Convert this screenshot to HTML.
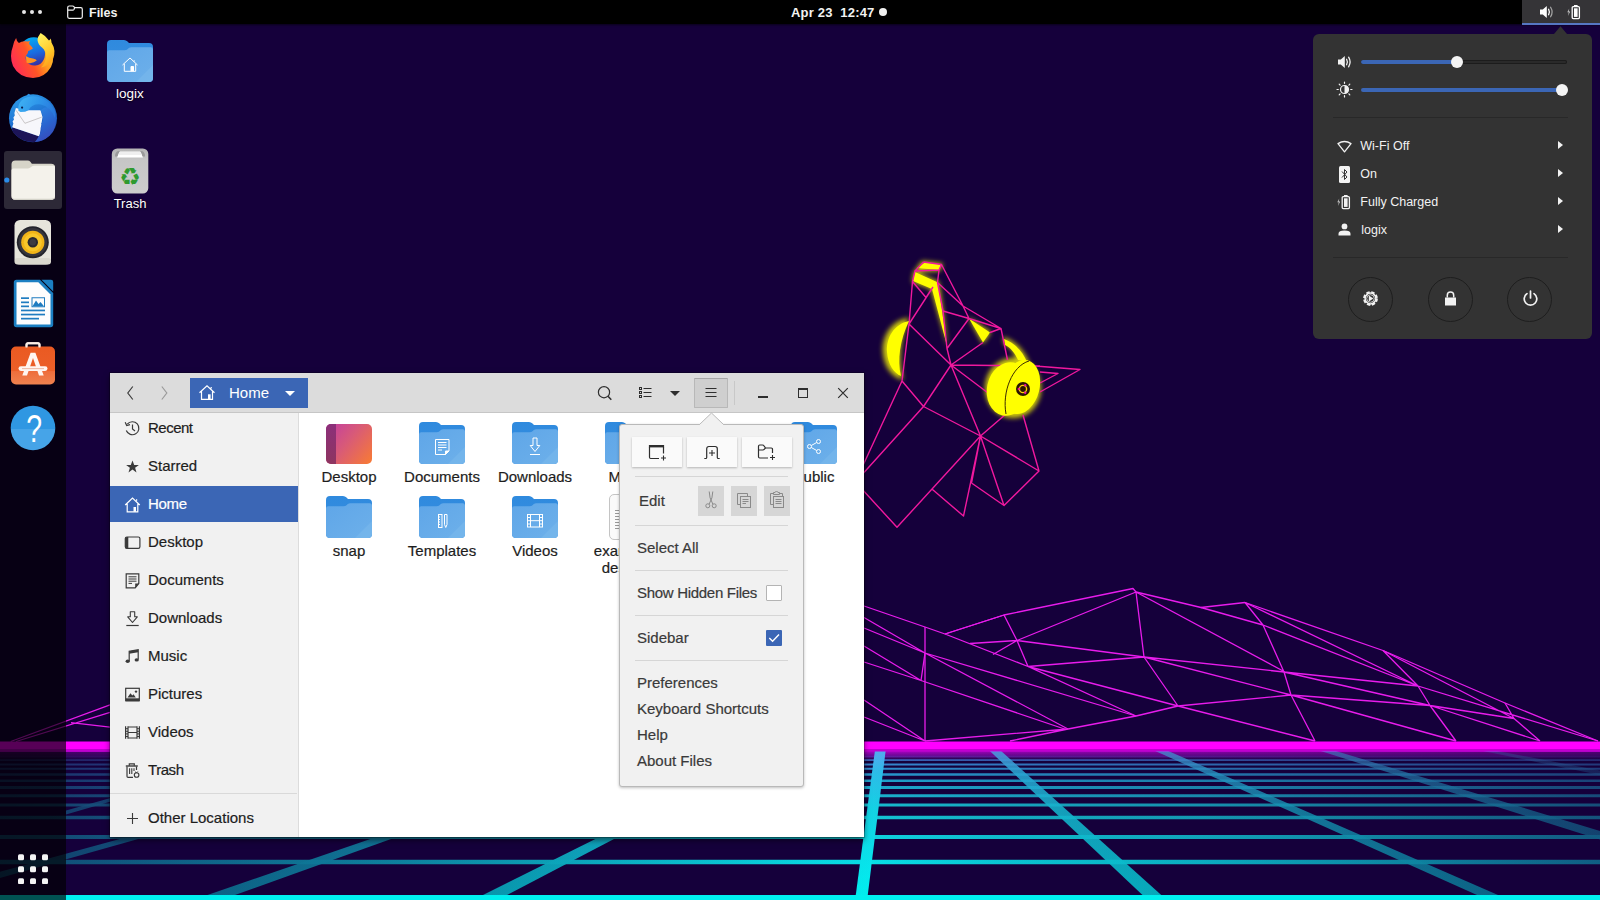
<!DOCTYPE html>
<html lang="en">
<head>
<meta charset="utf-8">
<title>Files</title>
<style>
*{box-sizing:border-box;margin:0;padding:0}
html,body{width:1600px;height:900px;overflow:hidden;background:#15003b}
body{position:relative;font-family:"Liberation Sans","DejaVu Sans",sans-serif;font-size:14px;color:#222}
.abs{position:absolute}
#wall{position:absolute;left:0;top:0;width:1600px;height:900px}
/* top bar */
#topbar{position:absolute;left:0;top:0;width:1600px;height:24px;background:#000;box-shadow:0 1px 2px rgba(0,0,0,.6);color:#f2f2f2;font-weight:bold;font-size:13px}
#topbar .t{position:absolute;top:0.8px;line-height:24px;white-space:nowrap}
#tray{position:absolute;left:1522px;top:0;width:78px;height:25px;background:#353437;border-bottom:2px solid #5677c3}
/* dock */
#dock{position:absolute;left:0;top:24px;width:66px;height:876px;background:rgba(0,0,0,0.66)}
#dock .run{position:absolute;left:4px;top:127px;width:58px;height:58px;background:#2d2937;border-radius:3px}
/* desktop icons */
.dlabel{position:absolute;color:#fff;font-size:13.5px;text-align:center;width:90px;text-shadow:0 1px 2px rgba(0,0,0,.8)}
/* window */
#win{position:absolute;left:110px;top:373px;width:754px;height:464px;background:#fff;box-shadow:0 0 0 1px rgba(0,0,0,.22),0 3px 6px rgba(0,0,0,.55)}
#hdr{position:absolute;left:0;top:0;width:754px;height:40px;background:#dcdcdc;border-bottom:1px solid #c6c6c6}
#path{position:absolute;left:80px;top:5px;width:118px;height:30px;background:#3b66b5;color:#fff}
#side{position:absolute;left:0;top:40px;width:189px;height:424px;background:#f1f1f1;border-right:1px solid #dcdcdc}
.row{position:absolute;left:0;width:188px;height:36px;line-height:36px;font-size:15px;color:#1d1d1d}
.row span{position:absolute;left:38px;top:0;white-space:nowrap}
.row svg{position:absolute;left:14px;top:10px;width:17px;height:17px}
.row.sel{background:#3b66b5;color:#fff}
.row span,.flabel,.mi{-webkit-text-stroke:0.2px currentColor}
.flabel{position:absolute;font-size:15px;color:#1d1d1d;text-align:center;width:110px;white-space:nowrap}
/* popover */
#pop{position:absolute;left:619px;top:424px;width:185px;height:363px;background:#f1f1f1;border:1px solid #b9b9b9;border-radius:3px;box-shadow:0 1px 3px rgba(0,0,0,.25)}
.mi{position:absolute;left:17px;font-size:15px;color:#3a3a3a;white-space:nowrap}
.pbtn{position:absolute;top:12px;width:49.5px;height:30px;background:#fafafa;box-shadow:0 1px 2px rgba(0,0,0,.25)}
.ebtn{position:absolute;top:61px;width:26px;height:30px;background:#d6d6d6}
.sep{position:absolute;left:15px;width:153px;height:1px;background:#d6d6d6}
/* system menu */
#sys{position:absolute;left:1312.5px;top:33.5px;width:279px;height:305.5px;background:#333;border-radius:6px;color:#f2f2f2;font-size:12.5px}
.si{position:absolute;left:47.8px;white-space:nowrap}
.sarrow{position:absolute;left:245px;width:0;height:0;border-left:5.5px solid #f2f2f2;border-top:4.5px solid transparent;border-bottom:4.5px solid transparent}
.circ{position:absolute;top:243px;width:45px;height:45px;border:1px solid #1e1e1e;border-radius:50%}
</style>
</head>
<body>
<svg id="wall" width="1600" height="900" viewBox="0 0 1600 900">
<defs>
<linearGradient id="hz" x1="0" y1="0" x2="0" y2="1"><stop offset="0" stop-color="#c400d4"/><stop offset="0.550" stop-color="#6a0a9a" stop-opacity=".85"/><stop offset="1" stop-color="#15003b" stop-opacity="0"/></linearGradient>
<linearGradient id="cy" gradientUnits="userSpaceOnUse" x1="0" y1="750" x2="0" y2="900"><stop offset="0" stop-color="#5060c8"/><stop offset="0.070" stop-color="#3a7fd0"/><stop offset="0.200" stop-color="#1f9fcb"/><stop offset="0.370" stop-color="#16bace"/><stop offset="0.580" stop-color="#0ed2de"/><stop offset="1" stop-color="#00eef0"/></linearGradient>
<linearGradient id="cyd" gradientUnits="userSpaceOnUse" x1="0" y1="750" x2="0" y2="900"><stop offset="0" stop-color="#58a8f0"/><stop offset="0.150" stop-color="#2cbce8"/><stop offset="0.400" stop-color="#14d2e4"/><stop offset="1" stop-color="#00f0f0"/></linearGradient>
<linearGradient id="cyr" gradientUnits="userSpaceOnUse" x1="860" y1="0" x2="1600" y2="0"><stop offset="0" stop-color="#fff" stop-opacity="1"/><stop offset="1" stop-color="#fff" stop-opacity=".45"/></linearGradient>
<linearGradient id="sidefade" gradientUnits="userSpaceOnUse" x1="0" y1="0" x2="1600" y2="0"><stop offset="0" stop-color="#15003b" stop-opacity=".68"/><stop offset="0.250" stop-color="#15003b" stop-opacity=".42"/><stop offset="0.500" stop-color="#15003b" stop-opacity=".05"/><stop offset="0.545" stop-color="#15003b" stop-opacity="0"/><stop offset="0.630" stop-color="#15003b" stop-opacity=".12"/><stop offset="0.750" stop-color="#15003b" stop-opacity=".22"/><stop offset="0.875" stop-color="#15003b" stop-opacity=".4"/><stop offset="1" stop-color="#15003b" stop-opacity=".58"/></linearGradient>
<filter id="glow" x="-30%" y="-30%" width="160%" height="160%"><feGaussianBlur stdDeviation="2.800"/></filter>
</defs>
<rect width="1600" height="900" fill="#15003b"/>
<!-- mountain mesh -->
<g fill="none" stroke="#e81cec" stroke-width="1.3" stroke-linejoin="round">
<polyline points="10.700,741.500 110,704.900 864,606 925,627 945,634 1004,615 1133,588.5 1136,592 1201,607.5 1245,602.5 1383,650.5 1505,703 1598,741"/>
<path d="M925,627V741M945,634L1028,666.5L1136,716M1004,615L1017,640.5L1028,666.5M945,634L1004,615M970,643.5L1017,640.5L1144,657M993,654.5L1017,640.5L1136,592M1136,592L1144,657L1178,706M1028,666.5L1144,657M1028,666.5L1178,706M1036,670L1136,716L1178,706M1068,729L1136,716M925,741L1068,729M1010,741L1068,729"/>
<path d="M864,617.5L925,653L1068,729M864,628L925,653M925,653L1136,716M864,646L921,680.5L925,653M864,662L921,680.5L1066,729.5M864,700L925,741M864,717L925,741"/>
<path d="M1136,592L1285,672M1201,607.5L1263,625M1245,602.5L1263,625L1284,672L1291,695L1315,741M1245,602.5L1418,686M1263,625L1418,686M1144,657L1284,672M1144,657L1291,695M1178,706L1291,695M1178,706L1315,741M1284,672L1418,686M1291,695L1430,705.5M1291,695L1456,741M1383,650.5L1418,686L1430,705.5L1456,741M1383,650.5L1514,718.5M1505,703L1514,718.5L1540,741M1418,686L1598,741M1430,705.5L1514,718.5M1430,705.5L1540,741M1284,672L1430,705.5"/>
<path d="M16,741.500L110,712.400M71,722.700L110,727.100"/>
</g>
<!-- horizon -->
<!-- grid -->
<g stroke="url(#cy)" fill="none">
<path stroke-width="1.600" d="M0,756.500H1600"/>
<path stroke-width="2" d="M0,760H1600M0,764.500H1600"/>
<path stroke-width="2.200" d="M0,768.750H1600"/>
<path stroke-width="2.500" d="M0,774.500H1600M0,780.750H1600"/>
<path stroke-width="2.800" d="M0,787.500H1600"/>
<path stroke-width="3" d="M0,795.750H1600"/>
<path stroke-width="3.200" d="M0,805H1600"/>
<path stroke-width="3.500" d="M0,817.500H1600"/>
<path stroke-width="4" d="M0,837H1600"/>
<path stroke-width="4.500" d="M0,862H1600"/>
</g>
<rect x="0" y="750" width="1600" height="12" fill="url(#hz)"/>
<g fill="url(#cyd)">
<polygon points="875,750 885.750,750 867.500,897 855.500,897"/>
<polygon points="988.750,750 1000,750 1161.250,895 1142.500,895" opacity=".88"/>
<polygon points="1153,750 1166,750 1498,895 1477,895" opacity=".8"/>
<polygon points="1317.500,750 1332.500,750 1600,831 1600,839.500" opacity=".72"/>
<polygon points="1478,750 1492,750 1600,770.500 1600,775" opacity=".4"/>
<polygon points="774,750 784,750 497.500,900 473,900" opacity=".95"/>
<polygon points="629,750 639,750 221,900 193,900" opacity=".9"/>
<polygon points="446,750 454,750 -78,900 -104,900" opacity=".85"/>
<polygon points="282,750 289,750 66,814.500 66,810.500" opacity=".8"/>
</g>
<rect x="0" y="752" width="1600" height="143" fill="url(#sidefade)"/>
<rect x="0" y="895" width="1600" height="5" fill="#00f0f0"/>
<rect x="0" y="741.500" width="1600" height="9" fill="#ff00ff"/>
<rect x="0" y="749" width="1600" height="2.500" fill="#c000d0"/>
<!-- wolf glow -->
<g fill="#ffff00" filter="url(#glow)" opacity=".8">
<path d="M909,318C891,320 882,337 883,352C884,367 892,377 903,380C898,360 900,340 909,318Z"/>
<ellipse cx="1013" cy="388" rx="28" ry="30"/>
<path d="M922,261L943,263.500L940,271L914,272Z"/>
<path d="M914,271L939,282L948,348L931,289L912,282Z"/>
<path d="M968,317L991,332L983,344Z"/>
<path d="M1003,337C1016,341 1025,352 1029,363L1017,360C1014,352 1010,346 1004,344Z"/>
</g>
<g fill="#ffff00">
<path d="M925,262.500L941,264.500L939.500,270L917,268Z"/>
<path d="M915,272L938,282.500L947,346L932,289L913,281Z"/>
<path d="M969,318.500L990,332.500L983,342.500Z"/>
<path d="M1004,339C1015,343 1023,352 1027,362L1018,360C1015,353 1010,347 1005,345Z"/>
</g>
<!-- wolf lines -->
<g fill="none" stroke="#f0189e" stroke-width="1.400" stroke-linejoin="round">
<path d="M923.500,262L941.500,264.500L939,270L915,271L923.500,262M915,271L912.500,281.500L909,324L902,381M941.500,264.500L963,306L1001,328.500L1007.500,360M939,270L937.500,282.500L943,311L969,318.500M915,271L939,270M912.500,281.500L926,297.500L933,287M933,287L909,324M937.500,282.500L963,306M943,311L947,348.500L951,365M969,318.500L947,348.500M969,318.500L1001,328.500M969,318.500L963,306M990,332.500L1001,328.500M983,342.500L951,365M909,324L951,365M951,365L1040,366M1035,366L1080,369.500L1040,392M1040,372L1058,373.500L1040,383M951,365L923.500,406.500M951,365L980.500,436M951,365L1000,402M902,381L923.500,406.500L980.500,436M902,381L850,493.500M923.500,406.500L850,488M850,476L897,527.300L980.500,436M932.500,489.500L963.500,516L980.500,436M971.500,483L1004,505.500L980.500,436M971.500,483L980.500,436M1004,505.500L1039,471L980.500,436M1039,471L1023,415M980.500,436L1006,414"/>
</g>
<g fill="#ffff00">
<path d="M909,321C894,324 886,338 887,352C888,365 894,373 901,376C897,360 900,340 909,321Z"/>
<ellipse cx="1008" cy="389" rx="21" ry="27" transform="rotate(12 1008 389)"/>
<ellipse cx="1021" cy="387" rx="18.500" ry="27.500" transform="rotate(14 1021 387)"/>
</g>
<path d="M1029,361C1012,366 1002,392 1006,414" fill="none" stroke="#3a2a00" stroke-width="1"/>
<circle cx="1023" cy="389" r="7" fill="#2a1500"/>
<circle cx="1023" cy="389" r="3.600" fill="none" stroke="#ffd000" stroke-width="1.400"/>
<circle cx="1018.800" cy="389" r="1.200" fill="#e8189a"/><circle cx="1025.200" cy="385.300" r="1.200" fill="#e8189a"/><circle cx="1025.200" cy="392.700" r="1.200" fill="#e8189a"/>
</svg>

<div id="topbar">
<svg class="abs" style="left:18px;top:8px" width="28" height="8"><circle cx="6" cy="4" r="2" fill="#e6e6e6"/><circle cx="14" cy="4" r="2" fill="#e6e6e6"/><circle cx="22" cy="4" r="2" fill="#e6e6e6"/></svg>
<svg class="abs" style="left:66px;top:4px" width="18" height="16" viewBox="0 0 18 16"><path d="M1.700,3.500Q1.700,2 3.200,2H6.500Q7.500,2 8.100,2.900L8.600,3.700H14.800Q16.300,3.700 16.300,5.200V12.800Q16.300,14.300 14.800,14.300H3.200Q1.700,14.300 1.700,12.800Z M1.700,6.200H6.600Q7.600,6.200 8.100,5.300L8.600,3.700" fill="none" stroke="#f2f2f2" stroke-width="1.200" stroke-linejoin="round"/></svg>
<span class="t" style="left:89px;font-size:12.500px">Files</span>
<span class="t" style="left:791px;font-size:13px;letter-spacing:0.2px">Apr 23&nbsp;&nbsp;12:47</span>
<svg class="abs" style="left:878px;top:7px" width="10" height="10"><circle cx="5" cy="5" r="4" fill="#f0f0f0"/></svg>
<div id="tray">
<svg class="abs" style="left:17px;top:5px" width="16" height="14" viewBox="0 0 16 14"><path d="M1,4.500H3.800L7.800,1V13L3.800,9.500H1Z" fill="#fff"/><path d="M9.600,4.200Q11.200,7 9.600,9.800" fill="none" stroke="#fff" stroke-width="1.300" stroke-linecap="round"/><path d="M11.600,2.200Q14.600,7 11.600,11.800" fill="none" stroke="#a8a8a8" stroke-width="1.200" stroke-linecap="round"/></svg>
<svg class="abs" style="left:44px;top:4px" width="16" height="16" viewBox="0 0 16 16"><path d="M3.300,4.500L1.300,8.300H2.800L2,12L4.200,7.600H2.700Z" fill="#cfcfcf"/><rect x="6.200" y="2.600" width="7.200" height="12" rx="1" fill="none" stroke="#fff" stroke-width="1.300"/><rect x="8" y="1" width="3.600" height="1.800" fill="#fff"/><rect x="8" y="4.300" width="3.600" height="8.600" fill="#fff"/></svg>
</div>
</div>

<svg width="0" height="0" style="position:absolute">
<defs>
<linearGradient id="fback" x1="0" y1="0" x2="0" y2="1"><stop offset="0" stop-color="#2f8ade"/><stop offset="1" stop-color="#3a8fdf"/></linearGradient>
<linearGradient id="ffront" x1="0" y1="0" x2="1" y2="1"><stop offset="0" stop-color="#5fa6e8"/><stop offset="1" stop-color="#6db0ea"/></linearGradient>
<symbol id="folder" viewBox="0 0 46 42">
<path d="M0,4Q0,0 4,0H17Q19,0 20.500,1.500L22,3H42Q46,3 46,7V38Q46,42 42,42H4Q0,42 0,38Z" fill="url(#fback)"/>
<path d="M0,12.500Q0,10.300 2.200,10.300H17.500Q19.500,10.300 20.800,9L21.500,8.300Q22.800,7.300 24.500,7.300H43.800Q46,7.300 46,9.500V38Q46,42 42,42H4Q0,42 0,38Z" fill="url(#ffront)"/>
<path d="M46,25V38Q46,42 42,42H29Z" fill="#7fbcee" opacity=".45"/>
</symbol>
<linearGradient id="ffx" x1="0.100" y1="0.750" x2="1" y2="0.350"><stop offset="0" stop-color="#ff2f52"/><stop offset="0.420" stop-color="#ff5426"/><stop offset="0.700" stop-color="#ff981e"/><stop offset="1" stop-color="#ffc430"/></linearGradient>
<linearGradient id="fft" x1="0.300" y1="0" x2="0.700" y2="1"><stop offset="0" stop-color="#fff060"/><stop offset="0.600" stop-color="#ffc828"/><stop offset="1" stop-color="#ff9a1a"/></linearGradient>
<linearGradient id="ffg" x1="0.300" y1="0" x2="0.600" y2="1"><stop offset="0" stop-color="#00aef5"/><stop offset="0.550" stop-color="#1a6be0"/><stop offset="1" stop-color="#3a2a9a"/></linearGradient>
<linearGradient id="tbb" x1="0.300" y1="0" x2="0.700" y2="1"><stop offset="0" stop-color="#2c9be8"/><stop offset="0.500" stop-color="#1f6fd0"/><stop offset="1" stop-color="#1a3aa0"/></linearGradient>
<linearGradient id="sw" x1="0" y1="0" x2="0" y2="1"><stop offset="0" stop-color="#ea5a22"/><stop offset="0.640" stop-color="#ec5f28"/><stop offset="0.660" stop-color="#ee6e3c"/><stop offset="1" stop-color="#f0824f"/></linearGradient>
</defs>
</svg>
<div id="dock">
<div class="run"></div>
</div>
<!-- firefox -->
<svg class="abs" style="left:9px;top:31px" width="48" height="50" viewBox="0 0 48 50">
<circle cx="24.800" cy="20.800" r="14.600" fill="url(#ffg)"/>
<path d="M7.100,7Q7.500,10 9.900,12Q13,9.500 19,10.500L21.100,9.800Q19.500,12 20.500,13.500Q22.500,15 23.900,17.500Q21.500,19 19,20.300Q19.500,22.500 17.500,24Q15.500,26.500 17.500,30Q20.500,35 26.500,34.500Q32,34 34.500,29Q37,24 35.500,19L41,14Q47,25 42,36Q35.500,47 24,47Q10,46.500 4,35Q0,25 4,15Q5,10 7.100,7Z" fill="url(#ffx)"/>
<path d="M16.800,25Q20,27.300 24,27.400Q27,27.800 27.800,29.400Q25,31.600 21,32.200Q18.500,32.300 17.500,31.500Z" fill="#ff9420"/>
<path d="M31.600,2.100Q28.500,6 28.500,9Q29,13.500 33,16.500Q37.500,20 37,26Q36.500,32 32,36.500Q40,35 44,28Q47.500,19.500 42.500,11.500Q42.500,9 41.400,7.500Q41,9 40,9.500Q37,5 31.600,2.100Z" fill="url(#fft)"/>
</svg>
<!-- thunderbird -->
<svg class="abs" style="left:8px;top:93px" width="50" height="50" viewBox="0 0 50 50">
<defs><linearGradient id="tbw" x1="0.200" y1="0" x2="0.600" y2="1"><stop offset="0" stop-color="#2b86e2"/><stop offset="0.550" stop-color="#2a63cf"/><stop offset="1" stop-color="#3a48b8"/></linearGradient>
<linearGradient id="tbh" x1="0" y1="0.300" x2="1" y2="0.600"><stop offset="0" stop-color="#3fb0f2"/><stop offset="0.500" stop-color="#2e96ea"/><stop offset="1" stop-color="#2a78dc"/></linearGradient></defs>
<circle cx="25" cy="25.300" r="24" fill="url(#tbb)"/>
<path d="M18.500,3.200Q19.300,1.300 20.800,0.800Q22.200,2 24.500,3Z" fill="#2e96ea"/>
<path d="M4.200,34.300L31.500,43.400L27,49Q14,49.500 5.500,40Q3.500,37 4.200,34.300Z" fill="#1c1458"/>
<path d="M7.900,15L17.500,17.300H32.500L34.500,24L31.500,43.400L4.200,34.300L5.400,30.500L4.600,28.500L6,26.500L5.400,24.500L6.800,22.500L6.400,20Z" fill="#f7f7fb"/>
<path d="M8.200,17.500L16.900,30.300L33.700,24.200" fill="none" stroke="#b4b0b0" stroke-width=".7"/>
<path d="M32.500,17.300Q36,22 35,28L33.200,30.500L34.500,32L32.500,35L33.500,36.500Q32.500,42 27,49Q38,48.500 45,38.500Q50,28 46.500,17Q40,11 32.500,17.300Z" fill="url(#tbw)"/>
<path d="M10.400,17.800Q9,10.500 15.500,5.800Q22,1.800 31,4Q41,7 46.500,17Q47.500,21 47,25Q43,14 33,11.500Q24,10.500 20.500,17.300L17,18.800L12.500,19L10.400,17.800Z" fill="url(#tbh)"/>
<circle cx="14.100" cy="14.600" r="1.100" fill="#0c1a4a"/>
</svg>
<!-- files -->
<svg class="abs" style="left:10.800px;top:159.600px" width="44.600" height="40.700" viewBox="0 0 46 42">
<path d="M0.500,4.500Q0.500,0.500 4.500,0.500H17Q19,0.500 20.200,2L21.500,3.800H41.500Q45.500,3.800 45.500,7.800V37Q45.500,41 41.500,41H4.500Q0.500,41 0.500,37Z" fill="#d6d4c8"/>
<path d="M0.500,10.500Q0.500,8.800 2.500,8.800H17.500Q19.300,8.800 20.400,7.600L21,7Q22.200,6 24,6H43.500Q45.500,6 45.500,8V37Q45.500,41 41.500,41H4.500Q0.500,41 0.500,37Z" fill="#f4f2eb"/>
<path d="M0.500,36V37Q0.500,41 4.500,41H41.500Q45.500,41 45.500,37V36Q45.500,40 41.500,40H4.500Q0.500,40 0.500,36Z" fill="#d0cec4"/>
</svg>
<svg class="abs" style="left:3px;top:176px" width="8" height="8"><circle cx="3.800" cy="4" r="2.600" fill="#2a8cea"/></svg>
<!-- rhythmbox -->
<svg class="abs" style="left:14px;top:220px" width="38" height="45" viewBox="0 0 38 45">
<rect x="0.500" y="0" width="36.500" height="44.500" rx="5.500" fill="#e7e5dc"/>
<rect x="0.500" y="38" width="36.500" height="6.500" rx="3" fill="#dad8ce"/>
<circle cx="18.800" cy="22.300" r="16" fill="#23232b"/>
<circle cx="18.800" cy="22.300" r="14.200" fill="#35353d"/>
<circle cx="18.800" cy="22.300" r="11.600" fill="#f1b418"/>
<circle cx="18.800" cy="22.300" r="9" fill="#f8c62a"/>
<circle cx="18.800" cy="22.300" r="5.200" fill="#2a2a30"/>
<circle cx="18.800" cy="22.300" r="3.200" fill="#3c3c42"/>
</svg>
<!-- writer -->
<svg class="abs" style="left:13px;top:279px" width="41" height="49" viewBox="0 0 41 49">
<path d="M3.500,0.800H27L40.200,14V45.500Q40.200,48.200 37.500,48.200H3.500Q0.800,48.200 0.800,45.500V3.500Q0.800,0.800 3.500,0.800Z" fill="#1b7fc2"/>
<path d="M4,3.300H25.300L37.500,15.500V45.500H3.500V3.800Q3.500,3.300 4,3.300Z" fill="#fdfdfd"/>
<path d="M28.500,0.800H38Q40.200,0.800 40.200,3V12.500Z" fill="#1b7fc2"/>
<g fill="#1f7cc0"><rect x="8" y="18.300" width="8" height="1.700"/><rect x="8" y="22.500" width="8" height="1.700"/><rect x="8" y="26.500" width="8" height="1.700"/><rect x="8" y="30.600" width="24" height="1.700"/><rect x="8" y="34.700" width="24" height="1.700"/><rect x="8" y="38.800" width="18" height="1.700"/>
<path d="M18.500,18.300H32V28.200H18.500ZM19.500,19.300V27.200H31V19.300Z" fill-rule="evenodd"/><path d="M19.500,27.200L23,21.500L25.500,25L27.500,23L31,27.200Z"/></g>
</svg>
<!-- software -->
<svg class="abs" style="left:10px;top:341px" width="46" height="44" viewBox="0 0 46 44">
<path d="M16.500,9V3.800Q16.500,2.300 18,2.300H28Q29.500,2.300 29.500,3.800V9" fill="none" stroke="#fbeee6" stroke-width="2"/>
<rect x="1" y="5.500" width="44" height="38" rx="5" fill="url(#sw)"/>
<path d="M16.500,6.500V3.800Q16.500,2.300 18,2.300H28Q29.500,2.300 29.500,3.800V6.500" fill="none" stroke="#fbeee6" stroke-width="2"/>
<path d="M12.300,34.500L20.600,11.800H25.400L33.700,34.500H29L23,17L17,34.500Z" fill="#fff5f0"/>
<rect x="8.500" y="25.300" width="29" height="4.600" rx="2.300" fill="#fff5f0"/>
<rect x="12" y="27.300" width="22" height=".8" fill="#e8a890"/>
</svg>
<!-- help -->
<svg class="abs" style="left:10px;top:405px" width="46" height="46" viewBox="0 0 46 46">
<defs><clipPath id="hc"><circle cx="23" cy="23" r="22.300"/></clipPath></defs>
<g clip-path="url(#hc)"><rect width="46" height="24" fill="#2f97e2"/><rect y="24" width="46" height="22" fill="#46a4e8"/></g>
<text x="0" y="37" transform="translate(24.200 0) scale(.720 1)" text-anchor="middle" font-family="Liberation Sans,sans-serif" font-size="39.500" fill="#fff">?</text>
</svg>
<!-- apps grid -->
<svg class="abs" style="left:18px;top:854px" width="30" height="30" viewBox="0 0 30 30"><g fill="#f4f4f4"><rect x="0" y="0.200" width="6" height="6" rx="1.500"/><rect x="12" y="0.200" width="6" height="6" rx="1.500"/><rect x="24" y="0.200" width="6" height="6" rx="1.500"/><rect x="0" y="12.200" width="6" height="6" rx="1.500"/><rect x="12" y="12.200" width="6" height="6" rx="1.500"/><rect x="24" y="12.200" width="6" height="6" rx="1.500"/><rect x="0" y="24.200" width="6" height="6" rx="1.500"/><rect x="12" y="24.200" width="6" height="6" rx="1.500"/><rect x="24" y="24.200" width="6" height="6" rx="1.500"/></g></svg>

<svg class="abs" style="left:107px;top:40px" width="46" height="42"><use href="#folder"/><g fill="none" stroke="#fff" stroke-width="1" stroke-linejoin="miter"><path d="M15.500,25L23,18L30.500,25M17.300,23.800V31.300H28.700V23.800M27.200,20.300V21.600"/><path d="M24,31.300V26.500H26.500V31.300" fill="#fff"/></g></svg>
<div class="dlabel" style="left:85px;top:85.500px;font-size:13.500px">logix</div>
<svg class="abs" style="left:111px;top:148px" width="38" height="46" viewBox="0 0 38 46">
<defs><linearGradient id="tr" x1="0" y1="0" x2="0" y2="1"><stop offset="0" stop-color="#b4b4b4"/><stop offset="0.250" stop-color="#c6c6c6"/><stop offset="1" stop-color="#cdcdcd"/></linearGradient></defs>
<rect x="0.800" y="0.500" width="36.500" height="45" rx="5.500" fill="url(#tr)"/>
<path d="M4,8.500Q4,3 8,3H30Q34,3 34,8.500Z" fill="#9a9a9a"/>
<path d="M6,9.500L8.500,4H29.500L32,9.500Z" fill="#fff"/><path d="M7,7L8.800,3.200H29.200L31,7Z" fill="#efefef"/>
<text x="19" y="37" text-anchor="middle" font-family="DejaVu Sans,sans-serif" font-size="24" fill="#2f9a2f">♻</text>
</svg>
<div class="dlabel" style="left:85px;top:196px;font-size:13px">Trash</div>

<div id="win">
<div id="hdr">
<svg class="abs" style="left:14px;top:11px" width="12" height="18" viewBox="0 0 12 18"><path d="M8.800,2.500L3.800,9L8.800,15.500" fill="none" stroke="#3c3c3c" stroke-width="1.200"/></svg>
<svg class="abs" style="left:48px;top:11px" width="12" height="18" viewBox="0 0 12 18"><path d="M3.800,2.500L8.800,9L3.800,15.500" fill="none" stroke="#9a9a9a" stroke-width="1.200"/></svg>
<div id="path">
<svg class="abs" style="left:8px;top:6px" width="18" height="17" viewBox="0 0 18 17"><path d="M1.500,8.800L9,1.800L16.500,8.800M3.500,7.500V15.300H14.500V7.500M13.200,3V4.500" fill="none" stroke="#fff" stroke-width="1.200"/><path d="M10,15.300V10.300H12.600V15.300Z" fill="#fff"/></svg>
<span class="abs" style="left:39px;top:0;line-height:30px;font-size:15px">Home</span>
<i class="abs" style="left:95px;top:13px;width:0;height:0;border-top:5.500px solid #fff;border-left:5px solid transparent;border-right:5px solid transparent"></i>
</div>
<svg class="abs" style="left:486px;top:11px" width="18" height="18" viewBox="0 0 18 18"><circle cx="8" cy="8.200" r="5.600" fill="none" stroke="#2e2e2e" stroke-width="1.200"/><path d="M12,12.300L15.300,15.800" stroke="#2e2e2e" stroke-width="1.500"/></svg>
<svg class="abs" style="left:528px;top:13px" width="14" height="13" viewBox="0 0 14 13"><g fill="none" stroke="#2e2e2e" stroke-width="1"><rect x="1.500" y="1.500" width="2" height="2"/><rect x="1.500" y="5.500" width="2" height="2"/><rect x="1.500" y="9.500" width="2" height="2"/><path d="M5.500,2.500H13.500M5.500,6.500H13.500M5.500,10.500H13.500"/></g></svg>
<i class="abs" style="left:560px;top:18px;width:0;height:0;border-top:5.500px solid #2e2e2e;border-left:5px solid transparent;border-right:5px solid transparent"></i>
<div class="abs" style="left:584px;top:5px;width:34px;height:30px;background:#cfcfcf;border:1px solid #b8b8b8;border-top-color:#a8a8a8;border-radius:1px"></div>
<svg class="abs" style="left:595px;top:14px" width="12" height="11" viewBox="0 0 12 11"><path d="M0.500,1.500H11.500M0.500,5.500H11.500M0.500,9.500H11.500" stroke="#2e2e2e" stroke-width="1.100"/></svg>
<div class="abs" style="left:624px;top:8px;width:1px;height:24px;background:#c8c8c8"></div>
<div class="abs" style="left:648px;top:23px;width:10px;height:2px;background:#2e2e2e"></div>
<div class="abs" style="left:688px;top:15px;width:10px;height:10px;border:1px solid #2e2e2e;border-top-width:2px"></div>
<svg class="abs" style="left:727px;top:14px" width="12" height="12" viewBox="0 0 12 12"><path d="M1.200,1.200L10.800,10.800M10.800,1.200L1.200,10.800" stroke="#2e2e2e" stroke-width="1.200"/></svg>
</div>
<div id="side">
<div class="row" style="top:-3px"><svg viewBox="0 0 17 17"><path d="M3.300,4.200A6.500,6.500 0 1 1 2.300,10.500" fill="none" stroke="#3a3a3a" stroke-width="1.200"/><path d="M1.200,2.200L2.700,5.600L6,4.600" fill="none" stroke="#3a3a3a" stroke-width="1.200"/><path d="M8.500,4.500V9L11,11" fill="none" stroke="#3a3a3a" stroke-width="1.200"/></svg><span style="letter-spacing:-0.5px">Recent</span></div>
<div class="row" style="top:35px"><svg viewBox="0 0 17 17"><path d="M8.500,2.500L10.200,7H14.900L11.100,9.800L12.500,14.400L8.500,11.600L4.500,14.400L5.900,9.800L2.100,7H6.800Z" fill="#3a3a3a"/></svg><span>Starred</span></div>
<div class="row sel" style="top:73px"><svg viewBox="0 0 17 17"><path d="M1.200,9L8.500,2L15.800,9M3.200,7.800V15.800H13.800V7.800M12.600,3.300V4.800" fill="none" stroke="#fff" stroke-width="1.200"/><path d="M9.500,15.800V11H12V15.800Z" fill="#fff"/></svg><span style="letter-spacing:-0.3px">Home</span></div>
<div class="row" style="top:111px"><svg viewBox="0 0 17 17"><rect x="1.300" y="3" width="14.600" height="11.400" rx="1.600" fill="none" stroke="#3a3a3a" stroke-width="1.200"/><path d="M1.300,4.500Q1.300,3 2.800,3H4.300V14.400H2.800Q1.300,14.400 1.300,12.900Z" fill="#3a3a3a"/></svg><span>Desktop</span></div>
<div class="row" style="top:149px"><svg viewBox="0 0 17 17"><path d="M2.200,1.800H14.800V11.500L11.200,15.800H2.200Z" fill="none" stroke="#3a3a3a" stroke-width="1.200"/><path d="M14.800,11.500H11.200V15.800Z" fill="#3a3a3a"/><path d="M4.500,4.800H12.500M4.500,7H12.500M4.500,9.200H12.500M4.500,11.400H8" stroke="#3a3a3a" stroke-width="1"/></svg><span>Documents</span></div>
<div class="row" style="top:187px"><svg viewBox="0 0 17 17"><path d="M6.300,1.800H10.700V6.800H13.300L8.500,12.500L3.700,6.800H6.300Z" fill="none" stroke="#3a3a3a" stroke-width="1.100" stroke-linejoin="round"/><path d="M2.300,15.500H14.700" stroke="#3a3a3a" stroke-width="1.200"/></svg><span>Downloads</span></div>
<div class="row" style="top:225px"><svg viewBox="0 0 17 17"><path d="M5.200,13V3.200L14.200,1.800V11.600" fill="none" stroke="#3a3a3a" stroke-width="1.200"/><path d="M5.200,3.200L14.200,1.800V4.300L5.200,5.700Z" fill="#3a3a3a"/><ellipse cx="3.700" cy="13.300" rx="2.100" ry="1.700" fill="#3a3a3a"/><ellipse cx="12.700" cy="11.900" rx="2.100" ry="1.700" fill="#3a3a3a"/></svg><span>Music</span></div>
<div class="row" style="top:263px"><svg viewBox="0 0 17 17"><rect x="1.700" y="2.300" width="13.600" height="12.400" fill="none" stroke="#3a3a3a" stroke-width="1.200"/><rect x="1.700" y="12.300" width="13.600" height="3" fill="#3a3a3a"/><path d="M3.500,11.500L6.500,7.200L8.300,9.500L9.500,8.300L11.800,11.500Z" fill="#3a3a3a"/><circle cx="12" cy="5.600" r="1.200" fill="#3a3a3a"/></svg><span>Pictures</span></div>
<div class="row" style="top:301px"><svg viewBox="0 0 17 17"><path d="M1.600,2.300V14.700M15.400,2.300V14.700M4,2.300V14.700M13,2.300V14.700M4,3H13M4,8.500H13M4,14H13" fill="none" stroke="#3a3a3a" stroke-width="1.200"/><path d="M1.600,4.700H4M1.600,7.300H4M1.600,9.900H4M1.600,12.500H4M13,4.700H15.400M13,7.300H15.400M13,9.900H15.400M13,12.500H15.400" stroke="#3a3a3a" stroke-width="1"/></svg><span>Videos</span></div>
<div class="row" style="top:339px"><svg viewBox="0 0 17 17"><path d="M3,4.500V14.200Q3,15.300 4.100,15.300H9" fill="none" stroke="#3a3a3a" stroke-width="1.200"/><path d="M12.500,4.500V8" fill="none" stroke="#3a3a3a" stroke-width="1.200"/><path d="M1.800,4H13.800" stroke="#3a3a3a" stroke-width="1.400"/><path d="M5.300,3.700V1.800H10.300V3.700" fill="none" stroke="#3a3a3a" stroke-width="1.200"/><path d="M5.600,6.300V12M7.800,6.300V12M10,6.300V9" stroke="#3a3a3a" stroke-width="1.100"/><circle cx="12.600" cy="13" r="2.300" fill="none" stroke="#3a3a3a" stroke-width="1.100"/><path d="M11,9.800L12.600,10.800L13.800,9.500" fill="none" stroke="#3a3a3a" stroke-width="1"/></svg><span style="letter-spacing:-0.45px">Trash</span></div>
<div class="abs" style="left:0;top:380px;width:187px;height:1px;background:#d9d9d9"></div>
<div class="row" style="top:387px"><svg viewBox="0 0 17 17"><path d="M8.500,3V14M3,8.500H14" stroke="#3a3a3a" stroke-width="1.100"/></svg><span>Other Locations</span></div>
</div>
<svg class="abs" style="left:216px;top:51px" width="46" height="40" viewBox="0 0 46 40"><defs><linearGradient id="dk" x1="0" y1="0.150" x2="1" y2="0.850"><stop offset="0" stop-color="#c4409e"/><stop offset="0.450" stop-color="#d85a78"/><stop offset="1" stop-color="#f5783a"/></linearGradient><linearGradient id="dk2" x1="0" y1="0" x2="0" y2="1"><stop offset="0" stop-color="#8c2f7a"/><stop offset="1" stop-color="#8e3560"/></linearGradient><clipPath id="dkc"><rect width="46" height="40" rx="5"/></clipPath></defs><g clip-path="url(#dkc)"><rect width="46" height="40" fill="url(#dk)"/><rect width="10" height="40" fill="url(#dk2)"/></g></svg>
<div class="flabel" style="left:184px;top:95px">Desktop</div>
<svg class="abs" style="left:309px;top:49px" width="46" height="42"><use href="#folder"/><g fill="none" stroke="#fff" stroke-width="1"><path d="M16.500,17.500H30V29L26.500,32.500H16.500Z"/><path d="M30,29H26.500V32.500Z" fill="#fff"/><path d="M19,20.500H27.500M19,23H27.500M19,25.500H27.500M19,28H23"/></g></svg>
<div class="flabel" style="left:277px;top:95px">Documents</div>
<svg class="abs" style="left:402px;top:49px" width="46" height="42"><use href="#folder"/><g fill="none" stroke="#fff" stroke-width="1" stroke-linejoin="round"><path d="M21,16H25V23.500H27.800L23,29.500L18.200,23.500H21Z"/><path d="M18,32.500H28"/></g></svg>
<div class="flabel" style="left:370px;top:95px">Downloads</div>
<svg class="abs" style="left:495px;top:49px" width="46" height="42"><use href="#folder"/></svg>
<div class="flabel" style="left:463px;top:95px">Music</div>
<svg class="abs" style="left:681px;top:49px" width="46" height="42"><use href="#folder"/><g fill="none" stroke="#fff" stroke-width="1"><circle cx="18.500" cy="24.500" r="2"/><circle cx="27.500" cy="19.500" r="2"/><circle cx="27.500" cy="29.500" r="2"/><path d="M20.300,23.500L25.700,20.500M20.300,25.500L25.700,28.500"/></g></svg>
<div class="flabel" style="left:649px;top:95px">Public</div>
<svg class="abs" style="left:216px;top:123px" width="46" height="42"><use href="#folder"/></svg>
<div class="flabel" style="left:184px;top:169px">snap</div>
<svg class="abs" style="left:309px;top:123px" width="46" height="42"><use href="#folder"/><g fill="none" stroke="#fff" stroke-width="1"><rect x="19.500" y="18.500" width="3.500" height="13"/><path d="M19.500,21H21M19.500,23.500H21M19.500,26H21M19.500,28.500H21"/><path d="M25.500,18.500H28V28.500L26.750,31.500L25.500,28.500Z"/></g></svg>
<div class="flabel" style="left:277px;top:169px">Templates</div>
<svg class="abs" style="left:402px;top:123px" width="46" height="42"><use href="#folder"/><g fill="none" stroke="#fff" stroke-width="1"><rect x="15.500" y="18.500" width="15" height="12.500"/><path d="M18.500,18.500V31M27.500,18.500V31M18.500,24.700H27.500M15.500,21.500H18.500M15.500,24.700H18.500M15.500,28H18.500M27.500,21.500H30.500M27.500,24.700H30.500M27.500,28H30.500"/></g></svg>
<div class="flabel" style="left:370px;top:169px">Videos</div>
<div class="abs" style="left:499px;top:121px;width:36px;height:46px;border:1px solid #c4c4c4;border-radius:5px;background:#fafafa"></div>
<div class="abs" style="left:505px;top:137px;width:7px;height:20px;background:repeating-linear-gradient(#999 0,#999 1px,transparent 1px,transparent 3px)"></div>
<div class="flabel" style="left:463px;top:169px;line-height:17px;white-space:normal;width:110px">examples.<br>desktop</div>

</div>
<svg class="abs" style="left:699px;top:412px;z-index:3" width="25" height="13" viewBox="0 0 25 13"><path d="M0.500,12.500L12.500,1L24.500,12.500" fill="#f1f1f1" stroke="#b9b9b9" stroke-width="1"/><rect x="1" y="12" width="23" height="1.500" fill="#f1f1f1"/></svg>
<div id="pop">
<div class="pbtn" style="left:12px"></div><div class="pbtn" style="left:67px"></div><div class="pbtn" style="left:122px"></div>
<svg class="abs" style="left:27.500px;top:19px" width="19" height="17" viewBox="0 0 19 17"><path d="M1.500,3V13.300Q1.500,14.500 2.700,14.500H11M15.500,9.500V3" fill="none" stroke="#2e2e2e" stroke-width="1.200"/><rect x="0.900" y="1" width="15.200" height="2.400" fill="#2e2e2e"/><path d="M15.500,11.500V16.500M13,14H18" stroke="#2e2e2e" stroke-width="1.100"/></svg>
<svg class="abs" style="left:83px;top:20px" width="18" height="15" viewBox="0 0 18 15"><path d="M1.300,13.500H2.600Q3.700,13.500 3.700,12.400V3.700Q3.700,1.500 5.900,1.500H12.100Q14.300,1.500 14.300,3.700V12.400Q14.300,13.500 15.400,13.500H16.700" fill="none" stroke="#2e2e2e" stroke-width="1.200"/><path d="M9,5V11M6,8H12" stroke="#2e2e2e" stroke-width="1.100"/></svg>
<svg class="abs" style="left:137px;top:18px" width="20" height="18" viewBox="0 0 20 18"><path d="M15.500,10V6.200Q15.500,5 14.300,5H8.500L7,2.800Q6.500,2 5.500,2H2.700Q1.500,2 1.500,3.200V13.800Q1.500,15 2.700,15H11M1.500,7H5.800Q6.800,7 7.400,6.200L8.500,5" fill="none" stroke="#2e2e2e" stroke-width="1.200"/><path d="M15.500,12V17M13,14.500H18" stroke="#2e2e2e" stroke-width="1.100"/></svg>
<div class="sep" style="top:51px"></div>
<span class="mi" style="left:19px;top:67px">Edit</span>
<div class="ebtn" style="left:78px"></div><div class="ebtn" style="left:111px"></div><div class="ebtn" style="left:144px"></div>
<svg class="abs" style="left:83px;top:65px" width="16" height="20" viewBox="0 0 16 20"><g fill="none" stroke="#8a8a8a" stroke-width="1"><path d="M6.200,1.500Q6.200,8 9.800,14M9.800,1.500Q9.800,8 6.200,14"/><circle cx="4.800" cy="15.800" r="2"/><circle cx="11.200" cy="15.800" r="2"/></g></svg>
<svg class="abs" style="left:117px;top:68px" width="14" height="15" viewBox="0 0 14 15"><g fill="none" stroke="#8a8a8a" stroke-width="1"><path d="M3.500,11.500H0.500V0.500H10.500V3.500"/><rect x="3.500" y="3.500" width="10" height="11"/><path d="M5.500,6.500H11.500M5.500,8.500H11.500M5.500,10.500H9"/></g></svg>
<svg class="abs" style="left:150px;top:66px" width="14" height="17" viewBox="0 0 14 17"><g fill="none" stroke="#8a8a8a" stroke-width="1"><path d="M3.500,13.500H0.500V2.500H3.500M9.500,2.500H12.500V5.500"/><path d="M3.500,3.500V1.500H5Q5,0.500 6.500,0.500Q8,0.500 8,1.500H9.500V3.500Z"/><rect x="3.500" y="5.500" width="10" height="11"/><path d="M5.500,8.500H11.500M5.500,10.500H11.500M5.500,12.500H11.500"/></g></svg>
<div class="sep" style="top:100px"></div>
<span class="mi" style="top:114px">Select All</span>
<div class="sep" style="top:145px"></div>
<span class="mi" style="top:159px;letter-spacing:-0.3px">Show Hidden Files</span>
<div class="abs" style="left:146px;top:160px;width:16px;height:16px;background:#fff;border:1px solid #b4b4b4;border-radius:1px"></div>
<div class="sep" style="top:190px"></div>
<span class="mi" style="top:204px">Sidebar</span>
<div class="abs" style="left:146px;top:205px;width:16px;height:16px;background:#3b66b5;border-radius:1px"></div>
<svg class="abs" style="left:147px;top:206px" width="14" height="14" viewBox="0 0 14 14"><path d="M2.300,7L5.600,10.300L12,3.500" fill="none" stroke="#fff" stroke-width="1.400"/></svg>
<div class="sep" style="top:235px"></div>
<span class="mi" style="top:249px">Preferences</span>
<span class="mi" style="top:275px">Keyboard Shortcuts</span>
<span class="mi" style="top:301px">Help</span>
<span class="mi" style="top:327px">About Files</span>
</div>


<svg class="abs" style="left:1554px;top:26px" width="13" height="8"><path d="M0,8L6.500,0.300L13,8Z" fill="#333"/></svg>
<div id="sys">
<svg class="abs" style="left:24px;top:21px" width="16" height="14" viewBox="0 0 16 14"><path d="M1,4.500H3.800L7.800,1V13L3.800,9.500H1Z" fill="#f2f2f2"/><path d="M9.600,4.200Q11.200,7 9.600,9.800M11.600,2.200Q14.600,7 11.600,11.800" fill="none" stroke="#f2f2f2" stroke-width="1.300" stroke-linecap="round"/></svg>
<div class="abs" style="left:48px;top:26px;width:206px;height:4px;border-radius:2px;background:#2a2a2a;box-shadow:inset 0 0 0 1px #1c1c1c"></div>
<div class="abs" style="left:48px;top:26px;width:96px;height:4px;border-radius:2px;background:#3b66b5"></div>
<div class="abs" style="left:138px;top:22px;width:12px;height:12px;border-radius:50%;background:#f4f4f4"></div>
<svg class="abs" style="left:23px;top:47px" width="17" height="17" viewBox="0 0 17 17"><g stroke="#f2f2f2" stroke-width="1.200" stroke-linecap="round"><path d="M8.500,1V2.300M8.500,14.700V16M1,8.500H2.300M14.700,8.500H16M3.200,3.200L4.100,4.100M12.900,12.900L13.800,13.800M3.200,13.800L4.100,12.900M12.900,4.100L13.800,3.200"/></g><circle cx="8.500" cy="8.500" r="4" fill="none" stroke="#f2f2f2" stroke-width="1.200"/><path d="M8.500,4.500A4,4 0 0 1 8.500,12.500Z" fill="#f2f2f2"/></svg>
<div class="abs" style="left:48px;top:54px;width:206px;height:4px;border-radius:2px;background:#3b66b5"></div>
<div class="abs" style="left:243px;top:50px;width:12px;height:12px;border-radius:50%;background:#f4f4f4"></div>
<div class="abs" style="left:20px;top:83px;width:235px;height:1px;background:#282828"></div>
<svg class="abs" style="left:24px;top:106px" width="15" height="13" viewBox="0 0 15 13"><path d="M1,3.600Q7.500,-0.600 14,3.600L7.500,11.800Z" fill="none" stroke="#f2f2f2" stroke-width="1.300" stroke-linejoin="round"/></svg>
<span class="si" style="top:105.2px">Wi-Fi Off</span><i class="sarrow" style="top:107.0px"></i>
<svg class="abs" style="left:26px;top:132px" width="11" height="17" viewBox="0 0 11 17"><rect x="0" y="0" width="11" height="17" rx="1.500" fill="#f2f2f2"/><path d="M3,5.500L8,11L5.500,13.500V3.500L8,6L3,11.500" fill="none" stroke="#333" stroke-width="1"/></svg>
<span class="si" style="top:133.2px">On</span><i class="sarrow" style="top:135.0px"></i>
<svg class="abs" style="left:23px;top:160px" width="16" height="16" viewBox="0 0 16 16"><path d="M3.300,4.500L1.300,8.300H2.800L2,12L4.200,7.600H2.700Z" fill="#cfcfcf"/><rect x="6.200" y="2.600" width="7.200" height="12" rx="1" fill="none" stroke="#f2f2f2" stroke-width="1.300"/><rect x="8" y="1" width="3.600" height="1.800" fill="#f2f2f2"/><rect x="8" y="4.300" width="3.600" height="8.600" fill="#f2f2f2"/></svg>
<span class="si" style="top:161.2px">Fully Charged</span><i class="sarrow" style="top:163.0px"></i>
<svg class="abs" style="left:25px;top:189px" width="13" height="13" viewBox="0 0 13 13"><circle cx="6.500" cy="3.400" r="2.900" fill="#f2f2f2"/><path d="M0.500,12.500V10.800Q0.500,7.500 6.500,7.500Q12.500,7.500 12.500,10.800V12.500Z" fill="#f2f2f2"/></svg>
<span class="si" style="top:189.2px;left:48.800px">logix</span><i class="sarrow" style="top:191.0px"></i>
<div class="abs" style="left:20px;top:223px;width:235px;height:1px;background:#282828"></div>
<div class="circ" style="left:35px"></div><div class="circ" style="left:115px"></div><div class="circ" style="left:194px"></div>
<svg class="abs" style="left:49px;top:256px" width="17" height="17" viewBox="0 0 17 17"><circle cx="8.500" cy="8.500" r="6.300" fill="none" stroke="#f2f2f2" stroke-width="2.200" stroke-dasharray="3.300 1.650"/><circle cx="8.500" cy="8.500" r="5.400" fill="none" stroke="#f2f2f2" stroke-width="1.500"/><path d="M6.800,5.600L11.400,8.500L6.800,11.400Z" fill="#f2f2f2"/><circle cx="8.500" cy="8.500" r="3.800" fill="none" stroke="#f2f2f2" stroke-width=".8"/></svg>
<svg class="abs" style="left:131px;top:257px" width="13" height="15" viewBox="0 0 13 15"><rect x="1" y="6.500" width="11" height="8" fill="#f2f2f2"/><path d="M3.300,6.500V4.200Q3.300,1 6.500,1Q9.700,1 9.700,4.200V6.500" fill="none" stroke="#f2f2f2" stroke-width="1.500"/></svg>
<svg class="abs" style="left:209px;top:256px" width="17" height="17" viewBox="0 0 17 17"><path d="M5,3.600A6.300,6.300 0 1 0 12,3.600" fill="none" stroke="#f2f2f2" stroke-width="1.700" stroke-linecap="round"/><path d="M8.500,1V8" stroke="#f2f2f2" stroke-width="1.700" stroke-linecap="round"/></svg>
</div>

</body>
</html>
